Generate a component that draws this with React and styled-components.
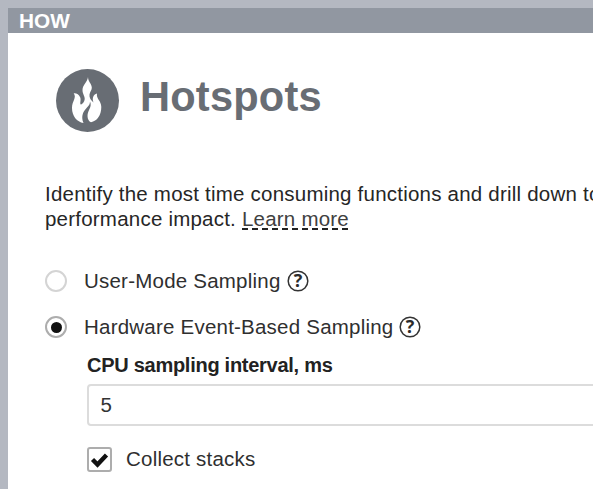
import React from 'react';
import styled, { createGlobalStyle } from 'styled-components';

const GlobalStyle = createGlobalStyle`
  * { box-sizing: border-box; }
  body {
    margin: 0;
    overflow: hidden;
    background: #b4b8c1;
    font-family: "Liberation Sans", Arial, sans-serif;
  }
`;

const Frame = styled.div`
  width: 593px;
  height: 489px;
  padding: 8px 0 0 8px;
  overflow: hidden;
`;

const Panel = styled.section`
  height: 481px;
  background: #fff;
  color: #2f2f2f;
  overflow: hidden;
`;

const PanelHeader = styled.header`
  height: 25px;
  padding-left: 11px;
  background: #9197a1;
  color: #fff;
  font-size: 20.8px;
  font-weight: bold;
  line-height: 26px;
`;

const Content = styled.div`
  padding-left: 37px;
`;

const TitleRow = styled.div`
  display: flex;
  align-items: center;
  height: 64px;
  margin: 36px 0 0 11px;
`;

const Title = styled.h1`
  margin: -8px 0 0 20px;
  color: #686d74;
  font-size: 41.6px;
  line-height: 48px;
  letter-spacing: 0.2px;
`;

const Description = styled.p`
  margin: 48px 0 0;
  color: #262626;
  font-size: 20.5px;
  line-height: 25px;
  letter-spacing: 0.22px;
  white-space: nowrap;
`;

const LearnMore = styled.a`
  display: inline-block;
  height: 24px;
  color: #404040;
  background: repeating-linear-gradient(90deg, #222 0 6px, transparent 6px 10px) 0 100% / 100% 2px no-repeat;
`;

const Option = styled.label`
  display: flex;
  align-items: center;
  height: 24px;
  margin-top: ${({ $gap }) => $gap}px;
  font-size: 20.5px;
  letter-spacing: 0.22px;
  white-space: nowrap;
`;

const Radio = styled.span`
  display: flex;
  align-items: center;
  justify-content: center;
  width: 22px;
  height: 22px;
  margin-right: 17px;
  border: 2px solid ${({ $checked }) => ($checked ? '#adadad' : '#d4d4d4')};
  border-radius: 50%;

  &::after {
    content: '';
    width: 11px;
    height: 11px;
    border-radius: 50%;
    background: ${({ $checked }) => ($checked ? '#111' : 'transparent')};
  }
`;

const HelpBadge = styled.svg`
  width: 22px;
  height: 22px;
  margin: -1px 0 0 6px;
  overflow: visible;
`;

const HelpMark = styled.text`
  fill: #2b2b2b;
  font: bold 18px "Open Sans", sans-serif;
  letter-spacing: 0;
  text-anchor: middle;
`;

const Settings = styled.div`
  padding-left: 42px;
`;

const FieldLabel = styled.div`
  margin-top: 14px;
  color: #222;
  font-size: 20px;
  font-weight: bold;
  line-height: 24px;
  letter-spacing: -0.27px;
  white-space: nowrap;
`;

const NumberField = styled.input`
  display: block;
  width: 540px;
  height: 42px;
  margin-top: 7px;
  padding: 0 11.5px;
  border: 2px solid #dcdcdc;
  border-radius: 4px;
  outline: none;
  color: #333;
  font: 20.5px "Liberation Sans", Arial, sans-serif;
`;

const CheckBox = styled.span`
  display: flex;
  align-items: center;
  justify-content: center;
  width: 25px;
  height: 25px;
  margin-right: 14px;
  border: 2px solid #adadad;
  border-radius: 3px;
`;

function FlameIcon() {
  return (
    <svg width="64" height="64" viewBox="0 0 64 64" aria-hidden="true">
      <circle cx="31.5" cy="31.5" r="31.5" fill="#686d74" />
      <path
        fill="#fff"
        d="M32 8C31.5 13 26.5 16 26.5 21C26.5 25 29 27 28.7 30C28.5 33 26 35.5 24.7 35.5C23.5 34 25.5 31 24 28C23 25.5 20.5 24 17.7 24.3C21 29 16 32 16 39C16 47 21 53 27.5 54C24.5 47 27.5 42 31 38.5C33 36.5 34 35 34 32.5C36.5 38 31.5 41 31.5 47C31.5 50 33 52.5 35 53.3C41 52 45.3 46.5 45.3 38C45.3 31.5 40 30 41 24.5C37 25.5 36 29.5 37.5 33.5C35 31.5 33 28.5 33.5 25.5C34 22.5 36 21 35.8 18.5C35.5 14.5 32 12.5 32 8Z"
      />
    </svg>
  );
}

function CheckIcon() {
  return (
    <svg width="19" height="17" viewBox="0 0 19 17" aria-hidden="true">
      <path d="M2.5 8.5L7.5 13.5L16.5 4" fill="none" stroke="#111" strokeWidth="4.4" />
    </svg>
  );
}

function SamplingMode({ label, checked, gap }) {
  return (
    <Option $gap={gap}>
      <Radio $checked={checked} role="radio" aria-checked={checked} />
      {label}
      <HelpBadge viewBox="0 0 22 22">
        <circle cx="11" cy="11" r="9.8" fill="none" stroke="#333" strokeWidth="1.5" />
        <HelpMark x="11" y="17">?</HelpMark>
      </HelpBadge>
    </Option>
  );
}

export default function App() {
  return (
    <Frame>
      <GlobalStyle />
      <Panel>
        <PanelHeader>HOW</PanelHeader>
        <Content>
          <TitleRow>
            <FlameIcon />
            <Title>Hotspots</Title>
          </TitleRow>
          <Description>
            Identify the most time consuming functions and drill down to
            <br />
            performance impact. <LearnMore>Learn more</LearnMore>
          </Description>
          <SamplingMode label="User-Mode Sampling" checked={false} gap={38} />
          <SamplingMode label="Hardware Event-Based Sampling" checked gap={22} />
          <Settings>
            <FieldLabel>CPU sampling interval, ms</FieldLabel>
            <NumberField defaultValue="5" aria-label="CPU sampling interval, ms" />
            <Option $gap={21}>
              <CheckBox role="checkbox" aria-checked="true">
                <CheckIcon />
              </CheckBox>
              Collect stacks
            </Option>
          </Settings>
        </Content>
      </Panel>
    </Frame>
  );
}
